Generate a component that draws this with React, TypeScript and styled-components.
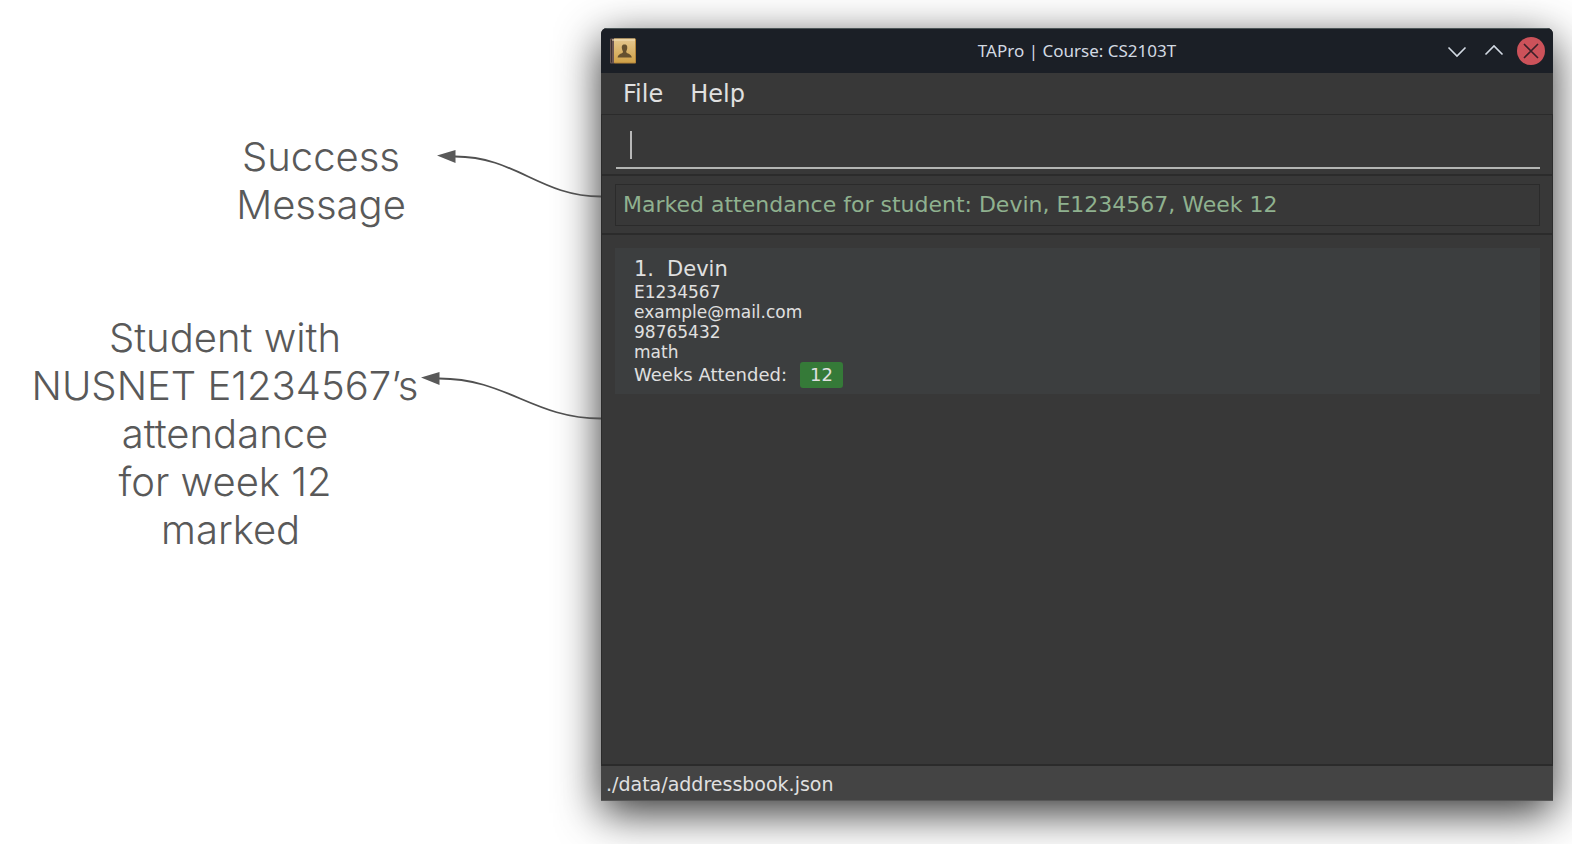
import React from "react";
import styled, { createGlobalStyle } from "styled-components";

const GlobalStyle = createGlobalStyle`
  *, *::before, *::after { box-sizing: border-box; }
  body { margin: 0; background: #ffffff; }
`;

const uiFont = `"DejaVu Sans", Verdana, sans-serif`;

const Page = styled.div`
  display: grid;
  grid-template-columns: minmax(0, 601fr) minmax(0, 952fr);
  min-height: 100vh;
  padding: 28px 19px 43px 0;
  overflow: hidden;
`;

const Notes = styled.aside`
  position: relative;
  z-index: 1;
  display: flex;
  flex-direction: column;
  align-items: flex-end;
  gap: 85px;
  padding-top: 105px;
`;

const Note = styled.div`
  display: flex;
  align-items: flex-start;
`;

const NoteText = styled.p<{ $width: number }>`
  display: flex;
  flex-direction: column;
  align-items: center;
  width: ${(p) => p.$width}px;
  margin: 0;
  color: #595959;
  font: 300 40px/48px Inter, "Open Sans", sans-serif;
  white-space: pre;
`;

const ArrowSvg = styled.svg<{ $drop: number }>`
  display: block;
  flex: none;
  margin-top: ${(p) => p.$drop}px;
`;

const Window = styled.main`
  display: flex;
  flex-direction: column;
  overflow: hidden;
  border-radius: 6px 6px 0 0;
  background: #383838;
  color: #e0e0e0;
  font-family: ${uiFont};
  box-shadow: 0 12px 44px rgba(0, 0, 0, 0.8);
`;

const TitleBar = styled.header`
  display: grid;
  grid-template-columns: 104px 1fr 104px;
  align-items: center;
  height: 45px;
  padding: 0 8px 1px;
  border-top: 1px solid #4b5557;
  background: #1b1f26;
`;

const Title = styled.h1`
  margin: 0;
  color: #d3dae3;
  font: 400 17px/24px "Noto Sans", sans-serif;
  text-align: center;
`;

const Controls = styled.div`
  display: flex;
  justify-content: flex-end;
  gap: 9px;
`;

const ControlButton = styled.button`
  display: grid;
  place-items: center;
  width: 28px;
  height: 28px;
  padding: 0;
  border: 0;
  background: none;
`;

const MenuBar = styled.nav`
  display: flex;
  gap: 27px;
  height: 42px;
  padding: 0 22px;
  border-bottom: 1px solid #2b2b2b;
`;

const MenuButton = styled.button`
  padding: 0;
  border: 0;
  background: none;
  color: #e0e0e0;
  font: 24px/42px ${uiFont};
`;

const CommandPane = styled.form`
  height: 61px;
  padding: 8px 12px 0 14px;
  border: solid #2b2b2b;
  border-width: 0 1px 2px;
`;

const CommandField = styled.label`
  display: flex;
  align-items: center;
  height: 46px;
  padding-left: 14px;
  border-bottom: 2px solid #b3b5b3;
`;

const Caret = styled.span`
  flex: none;
  width: 2px;
  height: 28px;
  background: #b8b8b8;
`;

const CommandInput = styled.input`
  flex: 1;
  min-width: 0;
  height: 36px;
  padding: 0;
  border: 0;
  outline: 0;
  background: none;
  color: #e0e0e0;
  font: 22px/32px ${uiFont};
`;

const ResultPane = styled.section`
  padding: 8px 12px 7px 13px;
  border: solid #2b2b2b;
  border-width: 0 1px 2px;
`;

const ResultText = styled.output`
  display: block;
  padding: 0 7px;
  border: 1px solid #2b2b2b;
  color: #8fb18f;
  font-size: 22px;
  line-height: 40px;
`;

const ListPane = styled.section`
  flex: 1;
  padding: 13px 12px 13px 13px;
  border: solid #2b2b2b;
  border-width: 0 1px 2px;
`;

const Card = styled.article`
  display: flex;
  flex-direction: column;
  padding: 8px 19px 6px;
  background: #3c3e3f;
`;

const Name = styled.h2`
  display: flex;
  gap: 13px;
  margin: 0;
  font-size: 21px;
  font-weight: 400;
  line-height: 26px;
`;

const Field = styled.span`
  font-size: 17px;
  line-height: 20px;
`;

const Weeks = styled.div`
  display: flex;
  align-items: center;
  gap: 13px;
  font-size: 18px;
  line-height: 26px;
`;

const WeekTag = styled.span`
  padding: 0 10px;
  border-radius: 3px;
  background: #357a38;
`;

const StatusBar = styled.footer`
  height: 35px;
  padding: 0 5px;
  border-bottom: 1px solid #575757;
  background: #444444;
  font-size: 19px;
  line-height: 37px;
`;

function Arrow({ width, drop }: { width: number; drop: number }) {
  const c = width - 18;
  return (
    <ArrowSvg $drop={drop} width={width} height={50} viewBox={`0 0 ${width} 50`} aria-hidden="true">
      <path
        d={`M18 8.500 C ${18 + c * 0.42} 8.500, ${18 + c * 0.58} 48.500, ${width} 48.500`}
        fill="none"
        stroke="#505050"
        strokeWidth="1.8"
      />
      <path d="M0 7.500 L18.500 2 V15 Z" fill="#595959" />
    </ArrowSvg>
  );
}

function BookIcon() {
  return (
    <svg width="28" height="28" viewBox="0 0 28 28" role="img" aria-label="Address book">
      <defs>
        <linearGradient id="cover" x1="0" y1="0" x2="0" y2="1">
          <stop offset="0" stopColor="#e5c891" />
          <stop offset="1" stopColor="#d0a148" />
        </linearGradient>
      </defs>
      <rect x="1" y="1.500" width="5" height="25" rx="1" fill="#6b5653" />
      <rect x="2" y="2.500" width="1" height="23" fill="#3c302f" />
      <rect x="5" y="1.500" width="22" height="25" rx="1" fill="#b5853a" />
      <rect x="5" y="1.500" width="21" height="24" fill="url(#cover)" />
      <path d="M3 3H26" stroke="#f3dfb7" />
      <path
        d="M15.500 7.500C12.900 7.500 12.600 9.500 12.900 11.500C13.100 13.100 14 13.900 14 14.900C14 16.700 9 16.200 8.600 20.500H22.800C22.400 16.200 17.200 16.700 17.200 14.900C17.200 13.900 18 13.100 18.200 11.500C18.500 9.500 18.100 7.500 15.500 7.500Z"
        fill="#65502f"
      />
    </svg>
  );
}

const details = ["E1234567", "example@mail.com", "98765432", "math"];

export default function App() {
  return (
    <>
      <GlobalStyle />
      <Page>
        <Notes>
          <Note>
            <NoteText $width={232}>
              <span>Success</span>
              <span>Message</span>
            </NoteText>
            <Arrow width={164} drop={15} />
          </Note>
          <Note>
            <NoteText $width={392}>
              <span>Student with</span>
              <span>NUSNET E1234567’s</span>
              <span>attendance</span>
              <span>for week 12</span>
              <span>{" marked"}</span>
            </NoteText>
            <Arrow width={180} drop={56} />
          </Note>
        </Notes>
        <Window>
          <TitleBar>
            <BookIcon />
            <Title>TAPro | Course: CS2103T</Title>
            <Controls>
              <ControlButton aria-label="Minimize">
                <svg width="28" height="28" fill="none" stroke="#d3dae3" strokeWidth="1.6">
                  <path d="M5.500 10.500 14 19l8.500-8.500" />
                </svg>
              </ControlButton>
              <ControlButton aria-label="Maximize">
                <svg width="28" height="28" fill="none" stroke="#d3dae3" strokeWidth="1.6">
                  <path d="M5.500 17.500 14 9l8.500 8.500" />
                </svg>
              </ControlButton>
              <ControlButton aria-label="Close">
                <svg width="28" height="28" fill="none" stroke="#3a2029" strokeWidth="1.6">
                  <circle cx="14" cy="14" r="14" fill="#cc525a" stroke="none" />
                  <path d="M7 7l14 14M21 7L7 21" />
                </svg>
              </ControlButton>
            </Controls>
          </TitleBar>
          <MenuBar>
            <MenuButton>File</MenuButton>
            <MenuButton>Help</MenuButton>
          </MenuBar>
          <CommandPane onSubmit={(e) => e.preventDefault()}>
            <CommandField>
              <Caret />
              <CommandInput aria-label="Command" />
            </CommandField>
          </CommandPane>
          <ResultPane>
            <ResultText>Marked attendance for student: Devin, E1234567, Week 12</ResultText>
          </ResultPane>
          <ListPane>
            <Card>
              <Name>
                <span>1.</span>
                <span>Devin</span>
              </Name>
              {details.map((d) => (
                <Field key={d}>{d}</Field>
              ))}
              <Weeks>
                <span>Weeks Attended:</span>
                <WeekTag>12</WeekTag>
              </Weeks>
            </Card>
          </ListPane>
          <StatusBar>./data/addressbook.json</StatusBar>
        </Window>
      </Page>
    </>
  );
}
